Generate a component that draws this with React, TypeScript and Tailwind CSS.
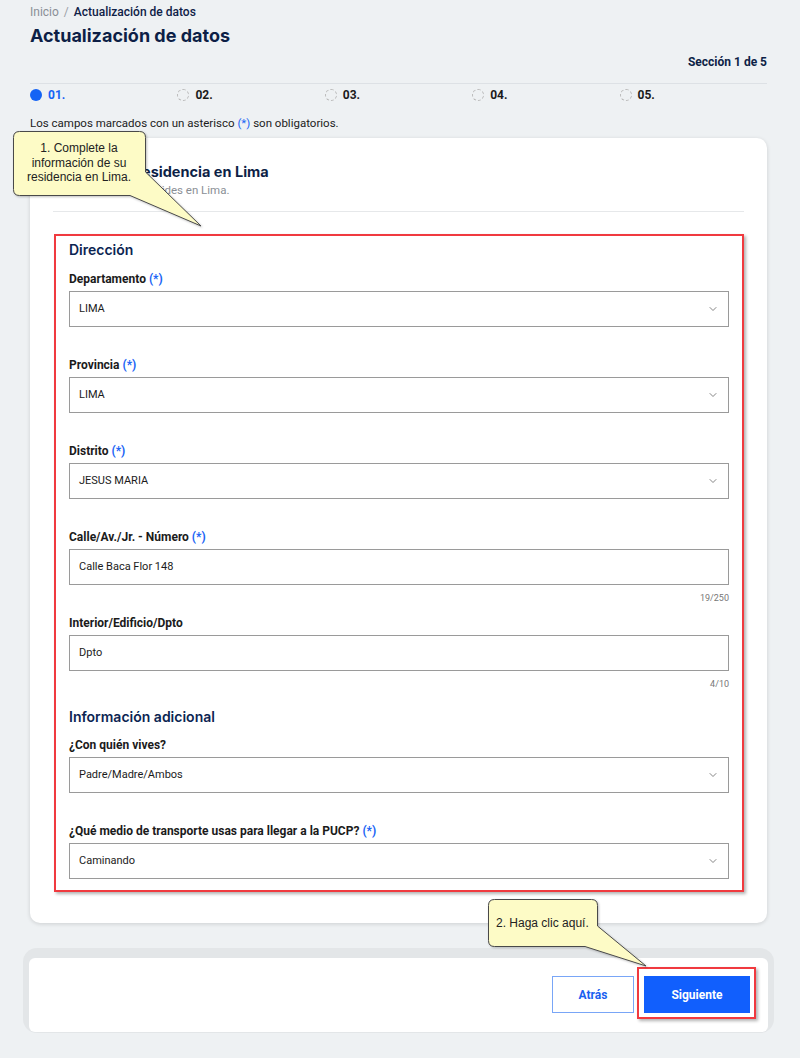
import React from "react";
import { ChevronDown } from "lucide-react";

const body = { fontFamily: "Roboto, 'Liberation Sans', sans-serif" };
const heading = { fontFamily: "Inter, 'Noto Sans', sans-serif" };
const note = { fontFamily: "'Liberation Sans', Arial, sans-serif" };

function Req() {
  return <span className="text-[#1a64f5]"> (*)</span>;
}

function Label({ children, req }: { children: React.ReactNode; req?: boolean }) {
  return (
    <div className="text-[12px] leading-[16px] font-bold text-[#1b1b1b]">
      {children}
      {req && <Req />}
    </div>
  );
}

function Select({ value }: { value: string }) {
  return (
    <div className="mt-[4px] h-[36px] border border-[#9a9a9a] flex items-center justify-between pl-[9px] pr-[9px] text-[11px] text-[#1b1b1b]">
      <span>{value}</span>
      <ChevronDown size={12} strokeWidth={1.6} className="text-[#666]" />
    </div>
  );
}

function Input({ value }: { value: string }) {
  return (
    <div className="mt-[4px] h-[36px] border border-[#9a9a9a] flex items-center pl-[9px] text-[11px] text-[#1b1b1b]">
      {value}
    </div>
  );
}

function Counter({ text }: { text: string }) {
  return <div className="mt-[7px] text-right text-[9px] leading-[12px] text-[#777]">{text}</div>;
}

function Step({ n, active }: { n: string; active?: boolean }) {
  return (
    <div className="flex items-center gap-[6px] h-[16px]">
      {active ? (
        <span className="w-[12px] h-[12px] rounded-full bg-[#1463f5]" />
      ) : (
        <span className="w-[12px] h-[12px] rounded-full border border-dashed border-[#b9b9b9]" />
      )}
      <span className={"text-[12px] font-bold " + (active ? "text-[#1463f5]" : "text-[#1b1b1b]")}>{n}</span>
    </div>
  );
}

export default function App() {
  return (
    <div className="relative w-[800px] h-[1058px] overflow-hidden bg-[#eef1f3] pl-[30px] pr-[33px] pt-[5px]" style={body}>
      <div className="text-[12px] leading-[14px]">
        <span className="text-[#8a8f96]">Inicio</span>
        <span className="text-[#9aa0a6] mx-[5px]">/</span>
        <span className="text-[#0f2147] font-medium">Actualización de datos</span>
      </div>
      <h1 className="mt-[3px] text-[18px] leading-[28px] font-bold text-[#0d1f46]" style={heading}>
        Actualización de datos
      </h1>
      <div className="mt-[4px] text-right text-[12px] leading-[16px] font-bold text-[#0d1f46]">Sección 1 de 5</div>
      <div className="mt-[13px] border-t border-[#dde1e5]" />
      <div className="mt-[3px] grid grid-cols-5">
        <Step n="01." active />
        <Step n="02." />
        <Step n="03." />
        <Step n="04." />
        <Step n="05." />
      </div>
      <div className="mt-[12px] text-[11.5px] leading-[16px] text-[#1b1b1b]">
        Los campos marcados con un asterisco <span className="text-[#1a64f5]">(*)</span> son obligatorios.
      </div>

      {/* form card */}
      <div className="mt-[7px] bg-white rounded-[10px] shadow-[0_1px_4px_rgba(0,0,0,0.14)] px-[23px] pt-[25px] pb-[31px]">
        <div className="text-[14.5px] leading-[18px] font-bold text-[#0d1f46]" style={heading}>
          Datos de tu residencia en Lima
        </div>
        <div className="mt-[2px] text-[11.5px] leading-[14px] text-[#8a8f96]">Cuéntanos dónde resides en Lima.</div>
        <div className="mt-[14px] border-t border-[#e6e8ea]" />

        <div className="mt-[22px] ml-[1px] border-2 border-[#f03a3f] shadow-[2px_2px_3px_rgba(0,0,0,0.3)] pl-[13px] pr-[13px] pt-[5px] pb-[11px]">
          <div className="text-[14px] leading-[18px] font-semibold text-[#0c2552]" style={heading}>
            Dirección
          </div>

          <div className="mt-[12px]">
            <Label req>Departamento</Label>
            <Select value="LIMA" />
          </div>
          <div className="mt-[30px]">
            <Label req>Provincia</Label>
            <Select value="LIMA" />
          </div>
          <div className="mt-[30px]">
            <Label req>Distrito</Label>
            <Select value="JESUS MARIA" />
          </div>
          <div className="mt-[30px]">
            <Label req>Calle/Av./Jr. - Número</Label>
            <Input value="Calle Baca Flor 148" />
            <Counter text="19/250" />
          </div>
          <div className="mt-[11px]">
            <Label>Interior/Edificio/Dpto</Label>
            <Input value="Dpto" />
            <Counter text="4/10" />
          </div>

          <div className="mt-[18px] text-[14px] leading-[18px] font-semibold text-[#0c2552]" style={heading}>
            Información adicional
          </div>
          <div className="mt-[11px]">
            <Label>¿Con quién vives?</Label>
            <Select value="Padre/Madre/Ambos" />
          </div>
          <div className="mt-[30px]">
            <Label req>¿Qué medio de transporte usas para llegar a la PUCP?</Label>
            <Select value="Caminando" />
          </div>
        </div>
      </div>

      {/* action bar */}
      <div className="mt-[25px] -ml-[7px] -mr-[7px] rounded-[14px] bg-[#e3e6e8] pt-[10px] px-[6px] pb-[1px]">
        <div className="bg-white rounded-[6px] flex justify-end gap-[10px] pt-[18px] pb-[19px] pr-[18px]">
          <button className="w-[82px] h-[37px] border border-[#79a6f7] text-[#1a5ff0] text-[12px] font-bold bg-white">
            Atrás
          </button>
          <span className="relative">
            <span className="absolute -left-[7px] -top-[9px] -right-[6px] -bottom-[6px] border-2 border-[#f03a3f] shadow-[2px_2px_3px_rgba(0,0,0,0.3)]" />
            <button className="relative w-[106px] h-[37px] bg-[#115ffd] text-white text-[12px] font-bold">
              Siguiente
            </button>
          </span>
        </div>
      </div>

      {/* guide callouts */}
      <svg className="absolute left-0 top-0 pointer-events-none" width="800" height="1058" viewBox="0 0 800 1058">
        <defs>
          <filter id="calloutShadow" x="-10%" y="-10%" width="130%" height="130%">
            <feDropShadow dx="1" dy="1" stdDeviation="1" floodColor="#000" floodOpacity="0.25" />
          </filter>
        </defs>
        <path
          d="M19.5,131.5 H139.5 Q145.5,131.5 145.5,137.5 V172 L201,226 L130,195.5 H19.5 Q13.5,195.5 13.5,189.5 V137.5 Q13.5,131.5 19.5,131.5 Z"
          fill="#fdfbc6"
          stroke="#4a4a4a"
          strokeWidth="1"
          filter="url(#calloutShadow)"
        />
        <path
          d="M494.5,899.5 H591.5 Q597.5,899.5 597.5,905.5 V926 L646,966 L585,946.5 H494.5 Q488.5,946.5 488.5,940.5 V905.5 Q488.5,899.5 494.5,899.5 Z"
          fill="#fdfbc6"
          stroke="#4a4a4a"
          strokeWidth="1"
          filter="url(#calloutShadow)"
        />
      </svg>
      <div
        className="absolute left-[13px] top-[141px] w-[132px] text-center text-[12px] leading-[14.5px] text-[#222]"
        style={note}
      >
        1. Complete la
        <br />
        información de su
        <br />
        residencia en Lima.
      </div>
      <div className="absolute left-[496px] top-[915px] text-[12px] leading-[16px] text-[#222]" style={note}>
        2. Haga clic aquí.
      </div>
    </div>
  );
}
